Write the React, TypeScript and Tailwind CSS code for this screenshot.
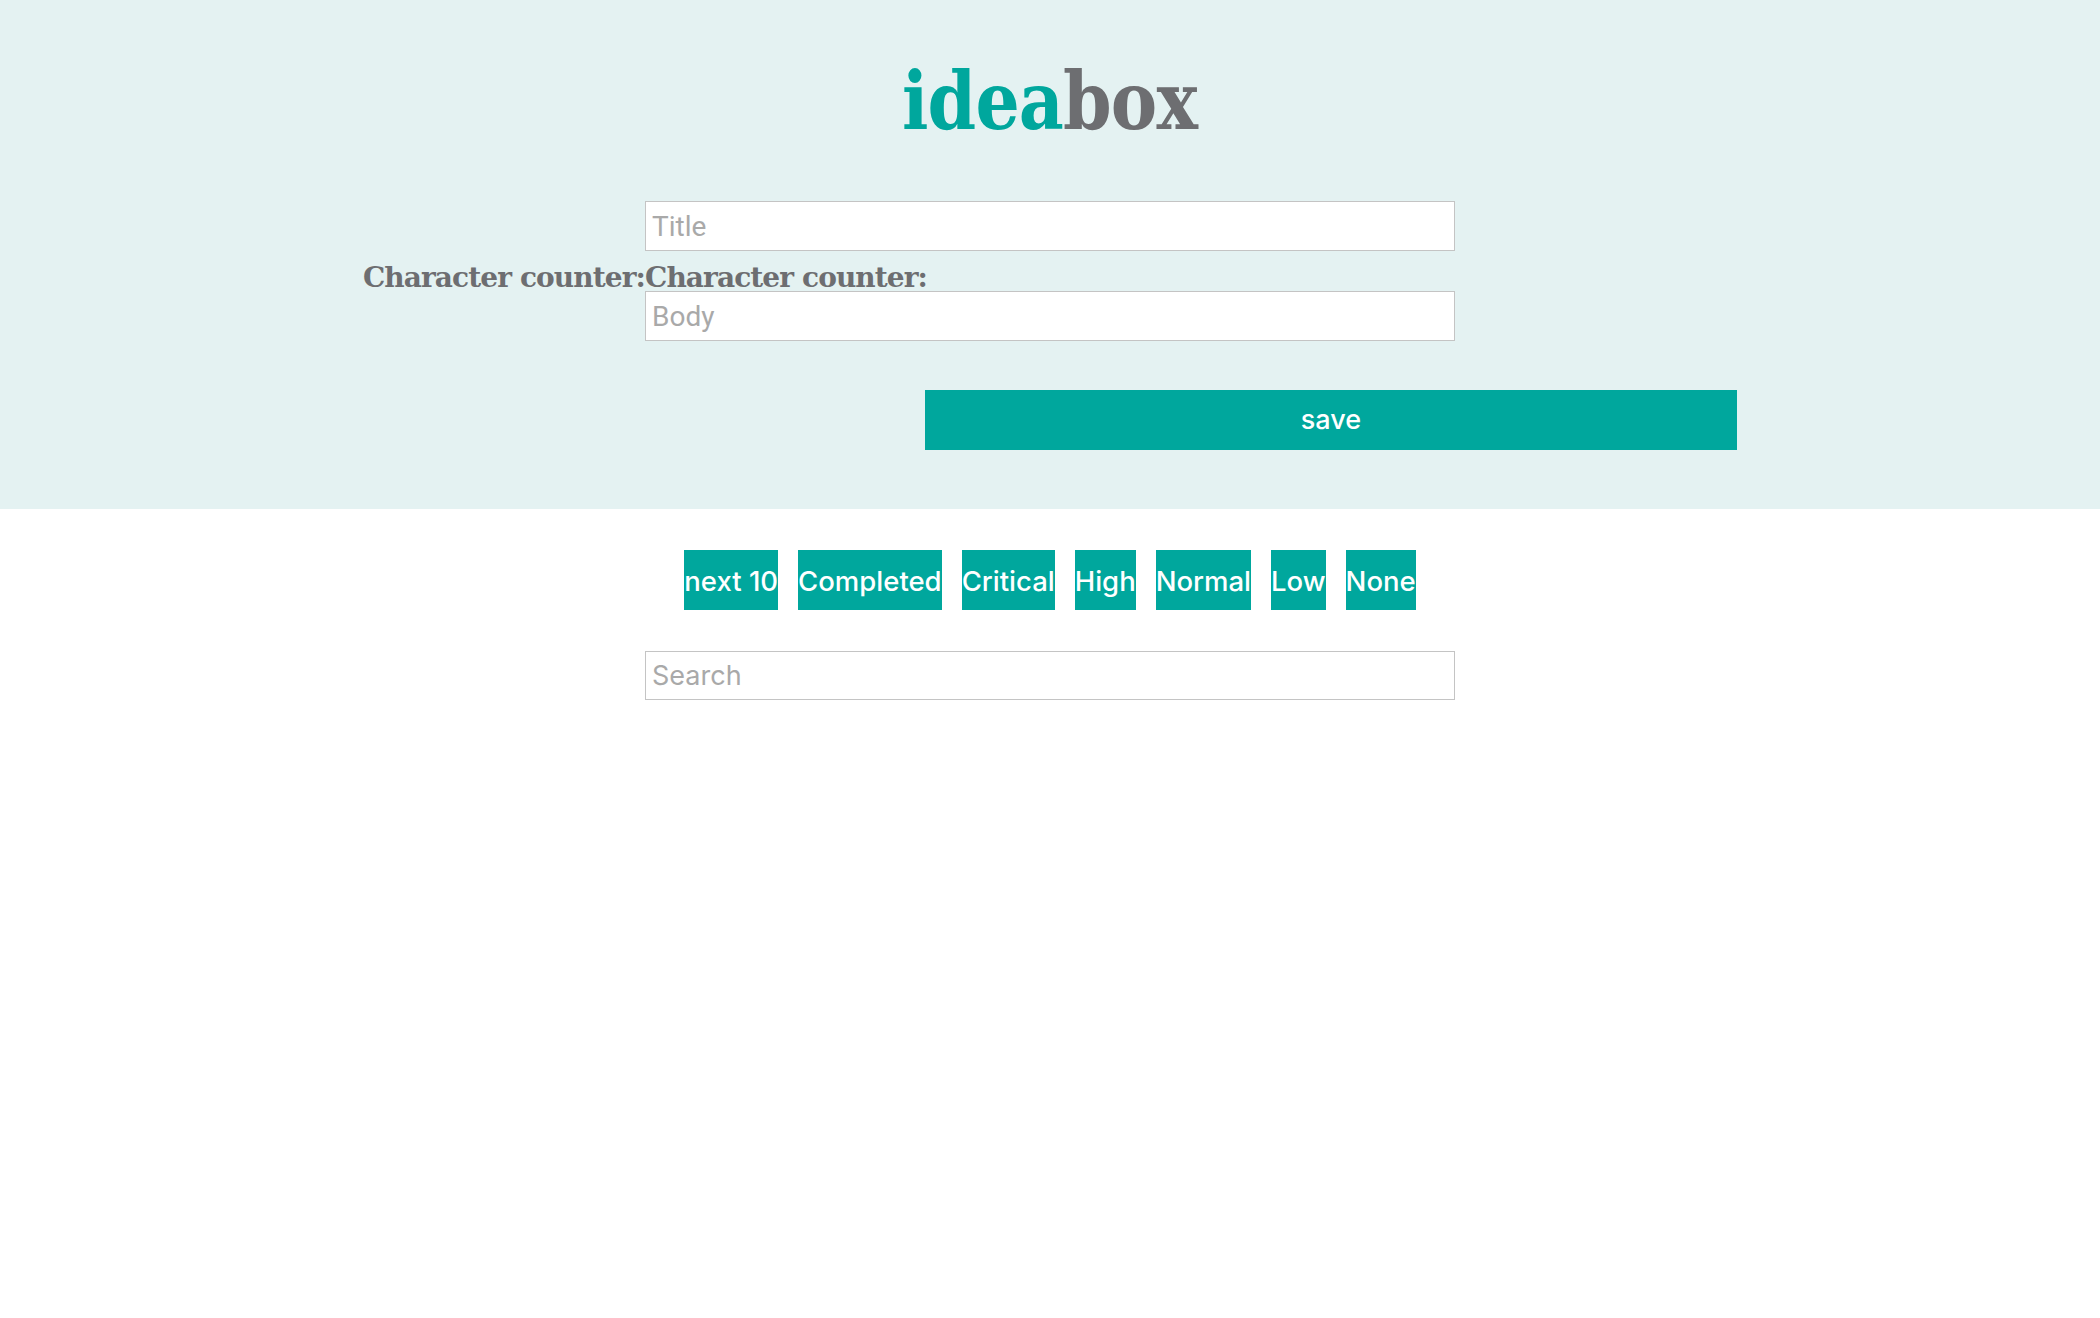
import { useState } from 'react';

const filters = ['next 10', 'Completed', 'Critical', 'High', 'Normal', 'Low', 'None'];

export default function App() {
  const [title, setTitle] = useState('');
  const [body, setBody] = useState('');
  const [search, setSearch] = useState('');

  return (
    <div className="min-h-[1318px] bg-white">
      <header className="h-[509px] bg-[#e4f2f2] pt-[61px]">
        <h1 className="text-center font-['DejaVu_Serif',serif] text-[80px] font-bold leading-[80px]">
          <span className="inline-block scale-x-[0.87] tracking-[-1px]">
            <span className="text-[#00a79d]">idea</span>
            <span className="text-[#6d6e71]">box</span>
          </span>
        </h1>

        <form
          className="mt-[60px] grid grid-cols-[1fr_810px_1fr]"
          onSubmit={(e) => e.preventDefault()}
        >
          <div />
          <input
            type="text"
            value={title}
            onChange={(e) => setTitle(e.target.value)}
            placeholder="Title"
            className="h-[50px] w-full border border-[#c4c4c4] bg-white px-[6px] font-['Roboto',sans-serif] text-[28px] text-[#333] outline-none placeholder:text-[#a9a9a9]"
          />
          <div />

          <p className="h-[40px] whitespace-nowrap pt-[11px] text-right font-['DejaVu_Serif',serif] text-[28px] font-bold leading-[31px] tracking-[-0.9px] text-[#6d6e71]">
            Character counter:
          </p>
          <p className="h-[40px] whitespace-nowrap pt-[11px] font-['DejaVu_Serif',serif] text-[28px] font-bold leading-[31px] tracking-[-0.9px] text-[#6d6e71]">
            Character counter:
          </p>
          <div />

          <div />
          <input
            type="text"
            value={body}
            onChange={(e) => setBody(e.target.value)}
            placeholder="Body"
            className="h-[50px] w-full border border-[#c4c4c4] bg-white px-[6px] font-['Roboto',sans-serif] text-[28px] text-[#333] outline-none placeholder:text-[#a9a9a9]"
          />
          <div />

          <div />
          <div className="col-span-2 pl-[280px] pt-[49px]">
            <button
              type="submit"
              className="flex h-[60px] w-[812px] items-center justify-center bg-[#00a79d] font-['Inter',sans-serif] text-[27px] font-medium text-white"
            >
              save
            </button>
          </div>
        </form>
      </header>

      <main className="flex flex-col items-center pt-[41px]">
        <div className="flex gap-[20px]">
          {filters.map((f) => (
            <button
              key={f}
              type="button"
              className="flex h-[60px] items-center bg-[#00a79d] pt-[4px] font-['Inter',sans-serif] text-[27.5px] font-medium text-white"
            >
              {f}
            </button>
          ))}
        </div>

        <input
          type="text"
          value={search}
          onChange={(e) => setSearch(e.target.value)}
          placeholder="Search"
          className="mt-[41px] h-[49px] w-[810px] border border-[#c4c4c4] bg-white px-[6px] font-['Inter',sans-serif] text-[27px] text-[#333] outline-none placeholder:text-[#a9a9a9]"
        />
      </main>
    </div>
  );
}
